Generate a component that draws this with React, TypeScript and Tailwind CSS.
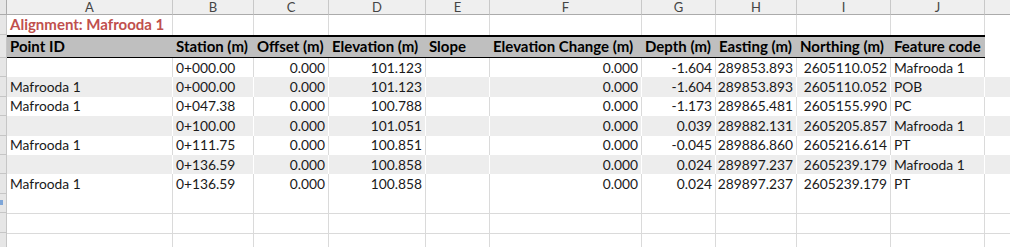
const cols = [
  { key: "A", w: 166, align: "left" },
  { key: "B", w: 81, align: "left" },
  { key: "C", w: 75, align: "right" },
  { key: "D", w: 97, align: "right" },
  { key: "E", w: 64, align: "left" },
  { key: "F", w: 152, align: "right" },
  { key: "G", w: 74, align: "right" },
  { key: "H", w: 81, align: "right" },
  { key: "I", w: 94, align: "right" },
  { key: "J", w: 94, align: "left" },
  { key: "", w: 90, align: "left" },
]

const headers = [
  "Point ID",
  "Station (m)",
  "Offset (m)",
  "Elevation (m)",
  "Slope",
  "Elevation Change (m)",
  "Depth (m)",
  "Easting (m)",
  "Northing (m)",
  "Feature code",
]

const rows = [
  ["", "0+000.00", "0.000", "101.123", "", "0.000", "-1.604", "289853.893", "2605110.052", "Mafrooda 1"],
  ["Mafrooda 1", "0+000.00", "0.000", "101.123", "", "0.000", "-1.604", "289853.893", "2605110.052", "POB"],
  ["Mafrooda 1", "0+047.38", "0.000", "100.788", "", "0.000", "-1.173", "289865.481", "2605155.990", "PC"],
  ["", "0+100.00", "0.000", "101.051", "", "0.000", "0.039", "289882.131", "2605205.857", "Mafrooda 1"],
  ["Mafrooda 1", "0+111.75", "0.000", "100.851", "", "0.000", "-0.045", "289886.860", "2605216.614", "PT"],
  ["", "0+136.59", "0.000", "100.858", "", "0.000", "0.024", "289897.237", "2605239.179", "Mafrooda 1"],
  ["Mafrooda 1", "0+136.59", "0.000", "100.858", "", "0.000", "0.024", "289897.237", "2605239.179", "PT"],
]

function Stub({ h, mark }: { h: string; mark?: boolean }) {
  return (
    <div className={`${h} w-[7px] shrink-0 border-r border-b border-[#c6c6c6] bg-[#e6e6e6] flex items-center`}>
      {mark && <div className="h-[5px] w-[3px] bg-[#7ea6d8]" />}
    </div>
  )
}

export default function App() {
  return (
    <div className="w-[1010px] h-[247px] overflow-hidden bg-white text-[13.8px] text-[#1a1a1a] font-['Lato','Liberation_Sans',sans-serif] leading-none">
      {/* column letters */}
      <div className="flex h-[15px]">
        <div className="w-[7px] shrink-0 border-r border-b border-[#ababab] bg-[#e6e6e6]" />
        {cols.map((c, i) => (
          <div
            key={i}
            style={{ width: c.w }}
            className="shrink-0 border-r border-b border-[#c8c8c8] border-b-[#ababab] bg-[#efefef] flex items-center justify-center text-[13px] leading-[14px] text-[#444]"
          >
            {c.key}
          </div>
        ))}
      </div>

      {/* title row */}
      <div className="flex h-[20px]">
        <Stub h="h-[20px]" />
        {cols.map((c, i) => (
          <div
            key={i}
            style={{ width: c.w }}
            className="shrink-0 border-r border-[#dadada] flex items-end pb-[3px] px-[3px] whitespace-nowrap"
          >
            {i === 0 && <span className="font-bold text-[#c0504d] text-[15px]">Alignment: Mafrooda 1</span>}
          </div>
        ))}
      </div>

      {/* header row */}
      <div className="flex h-[23px]">
        <Stub h="h-[23px]" />
        {cols.map((c, i) =>
          i < 10 ? (
            <div
              key={i}
              style={{ width: c.w }}
              className="shrink-0 border-t-2 border-b border-black bg-[#bfbfbf] flex items-end pb-[3px] px-[3px] whitespace-nowrap font-bold text-[15px] text-black"
            >
              {headers[i]}
            </div>
          ) : (
            <div key={i} style={{ width: c.w }} className="shrink-0 border-r border-[#dadada]" />
          )
        )}
      </div>

      {/* data rows */}
      {rows.map((r, ri) => {
        const band = ri % 2 === 1
        return (
          <div key={ri} className="flex h-[19.4px]">
            <Stub h="h-[19.4px]" />
            {cols.map((c, i) => (
              <div
                key={i}
                style={{ width: c.w }}
                className={`shrink-0 border-r flex items-end pb-[3px] px-[3px] whitespace-nowrap ${
                  band ? "bg-[#ededed] border-white" : "border-[#dadada]"
                } ${c.align === "right" ? "justify-end" : "justify-start"}`}
              >
                {r[i] ?? ""}
              </div>
            ))}
          </div>
        )
      })}

      {/* empty rows */}
      {[0, 1, 2, 3].map((ri) => (
        <div key={ri} className="flex h-[19.4px]">
          <Stub h="h-[19.4px]" mark={ri === 0} />
          {cols.map((c, i) => (
            <div
              key={i}
              style={{ width: c.w }}
              className={`shrink-0 border-r border-[#dadada] ${ri > 0 ? "border-t" : ""}`}
            />
          ))}
        </div>
      ))}
    </div>
  )
}
